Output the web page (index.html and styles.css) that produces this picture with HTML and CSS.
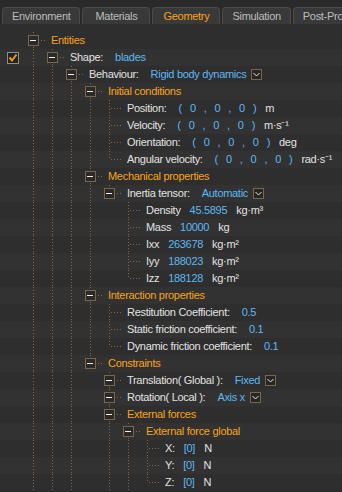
FILE: index.html
```html
<!DOCTYPE html>
<html lang="en">
<head>
  <meta charset="UTF-8" />
  <title>Geometry</title>
<link rel="stylesheet" href="styles.css">
</head>
<body>
<div class="tabs">
  <div class="tab">Environment</div>
  <div class="tab">Materials</div>
  <div class="tab active">Geometry</div>
  <div class="tab">Simulation</div>
  <div class="tab">Post-Processing</div>
</div>
<div class="tree" id="tree"></div>

<script>
  const vec = (unit) => ({ vec: true, unit: unit });

  const data = [
    { text: "Entities", group: true, more: true, kids: [
      { text: "Shape:", val: "blades", check: true, more: true, kids: [
        { text: "Behaviour:", val: "Rigid body dynamics", combo: true, more: true, kids: [
          { text: "Initial conditions", group: true, kids: [
            Object.assign({ text: "Position:" }, vec("m")),
            Object.assign({ text: "Velocity:" }, vec("m·s⁻¹")),
            Object.assign({ text: "Orientation:" }, vec("deg")),
            Object.assign({ text: "Angular velocity:" }, vec("rad·s⁻¹"))
          ]},
          { text: "Mechanical properties", group: true, kids: [
            { text: "Inertia tensor:", val: "Automatic", combo: true, kids: [
              { text: "Density", val: "45.5895", unit: "kg·m³", tight: true },
              { text: "Mass", val: "10000", unit: "kg", tight: true },
              { text: "Ixx", val: "263678", unit: "kg·m²", tight: true },
              { text: "Iyy", val: "188023", unit: "kg·m²", tight: true },
              { text: "Izz", val: "188128", unit: "kg·m²", tight: true }
            ]}
          ]},
          { text: "Interaction properties", group: true, kids: [
            { text: "Restitution Coefficient:", val: "0.5" },
            { text: "Static friction coefficient:", val: "0.1" },
            { text: "Dynamic friction coefficient:", val: "0.1" }
          ]},
          { text: "Constraints", group: true, kids: [
            { text: "Translation( Global ):", val: "Fixed", combo: true, box: true },
            { text: "Rotation( Local ):", val: "Axis x", combo: true, box: true },
            { text: "External forces", group: true, more: true, kids: [
              { text: "External force global", group: true, more: true, kids: [
                { text: "X:", val: "[0]", unit: "N", short: true },
                { text: "Y:", val: "[0]", unit: "N", short: true },
                { text: "Z:", val: "[0]", unit: "N", short: true }
              ]}
            ]}
          ]}
        ]}
      ]}
    ]}
  ];

  const checkSvg = '<svg class="check" width="12" height="12" viewBox="0 0 12 12">' +
    '<rect x="0.5" y="0.5" width="11" height="11" fill="#232323" stroke="#8e8e8e"/>' +
    '<path d="M2.5 5.5 L5 8.5 L9.5 2.5" fill="none" stroke="#f39a12" stroke-width="2"/></svg>';

  const comboSvg = '<svg class="combo" width="11" height="11" viewBox="0 0 11 11">' +
    '<rect x="0.5" y="0.5" width="10" height="10" fill="#262626" stroke="#7d6549"/>' +
    '<path d="M2.5 4 L5.5 7 L8.5 4" fill="none" stroke="#e8e8e8" stroke-width="1"/></svg>';

  function content(n) {
    let html = '<span class="lbl' + (n.group ? ' grp' : '') + '">' + n.text + '</span>';
    if (n.vec) {
      html += '<span class="vec"><i>(</i><i>0</i><i>,</i><i>0</i><i>,</i><i>0</i><i>)</i></span>';
    }
    if (n.val) html += '<span class="val">' + n.val + '</span>';
    if (n.combo) html += comboSvg;
    if (n.unit) html += '<span class="unit">' + n.unit + '</span>';
    let cls = "item";
    if (n.tight) cls += " tight";
    if (n.short) cls += " short";
    if (n.vec) cls += " vector";
    return '<span class="' + cls + '">' + html + '</span>';
  }

  const tree = document.getElementById("tree");

  function addRow(n, trail, last) {
    let html = '<span class="gutter">' + (n.check ? checkSvg : "") + '</span>';
    trail.forEach(function (on) {
      html += '<span class="cell' + (on ? " pass" : "") + '"></span>';
    });
    html += '<span class="cell ' + (last ? "ell" : "tee") + '">' +
      (n.kids || n.box ? '<span class="box"></span>' : "") + '</span>';
    html += content(n);
    const row = document.createElement("div");
    row.className = "row";
    row.innerHTML = html;
    tree.appendChild(row);
  }

  function walk(nodes, trail) {
    nodes.forEach(function (n, i) {
      const last = i === nodes.length - 1 && !n.more;
      addRow(n, trail, last);
      if (n.kids) walk(n.kids, trail.concat(!last));
    });
  }

  walk(data, []);
</script>
</body>
</html>
```

FILE: styles.css
```css
body {
  margin: 0;
  width: 342px;
  height: 492px;
  overflow: hidden;
  background-color: #2a2a2a;
  font-family: "Liberation Sans", Arial, sans-serif;
  font-size: 11px;
  letter-spacing: -0.3px;
  color: #e2e2e2;
}

/* tab strip */
.tabs {
  display: flex;
  gap: 2px;
  height: 17px;
  padding: 7px 0 0 2px;
  white-space: nowrap;
  overflow: hidden;
}

.tab {
  flex: none;
  min-width: 48px;
  padding: 0 9px;
  text-align: center;
  line-height: 16px;
  color: #bdbdbd;
  background-color: #393939;
  border: 1px solid #4b4b4b;
  border-bottom: 0;
  border-radius: 4px 4px 0 0;
}

.tab.active {
  color: #f9a31b;
}

/* tree */
.tree {
  padding-top: 8px;
  background-color: #2e2e2e;
}

.row {
  display: flex;
  height: 17px;
  line-height: 17px;
  white-space: nowrap;
}

.row:nth-child(even) {
  background-color: #323232;
}

.gutter {
  flex: none;
  width: 24px;
  display: flex;
  align-items: center;
  padding-left: 7px;
  box-sizing: border-box;
}

.check {
  display: block;
}

.cell {
  flex: none;
  width: 19px;
  position: relative;
}

.cell.pass::before,
.cell.tee::before,
.cell.ell::before {
  content: "";
  position: absolute;
  left: 9px;
  top: 0;
  width: 1px;
  height: 17px;
  background: repeating-linear-gradient(to bottom, #85664a 0 1px, transparent 1px 3px);
}

.cell.ell::before {
  height: 9px;
}

.cell.tee::after,
.cell.ell::after {
  content: "";
  position: absolute;
  left: 10px;
  top: 8px;
  width: 13px;
  height: 1px;
  background: repeating-linear-gradient(to right, transparent 0 1px, #85664a 1px 2px, transparent 2px 3px);
  z-index: 1;
}

.box {
  position: absolute;
  left: 4px;
  top: 3px;
  width: 9px;
  height: 9px;
  border: 1px solid #7d6549;
  background-color: #2a2a2a;
  z-index: 2;
}

.box::after {
  content: "";
  position: absolute;
  left: 1px;
  top: 4px;
  width: 6px;
  height: 1px;
  background-color: #f0f0f0;
}

.item {
  display: flex;
  align-items: center;
  gap: 12px;
  padding-left: 8px;
}

.item.tight {
  gap: 9px;
}

.item.short {
  gap: 9px;
}

.item.vector .unit {
  margin-left: -3px;
}

.lbl.grp {
  color: #f9a31b;
}

.val,
.vec {
  color: #5db8f4;
}

.vec {
  display: flex;
  gap: 8px;
}

.vec i {
  font-style: normal;
}

.combo {
  display: block;
  margin-left: -7px;
}
```
